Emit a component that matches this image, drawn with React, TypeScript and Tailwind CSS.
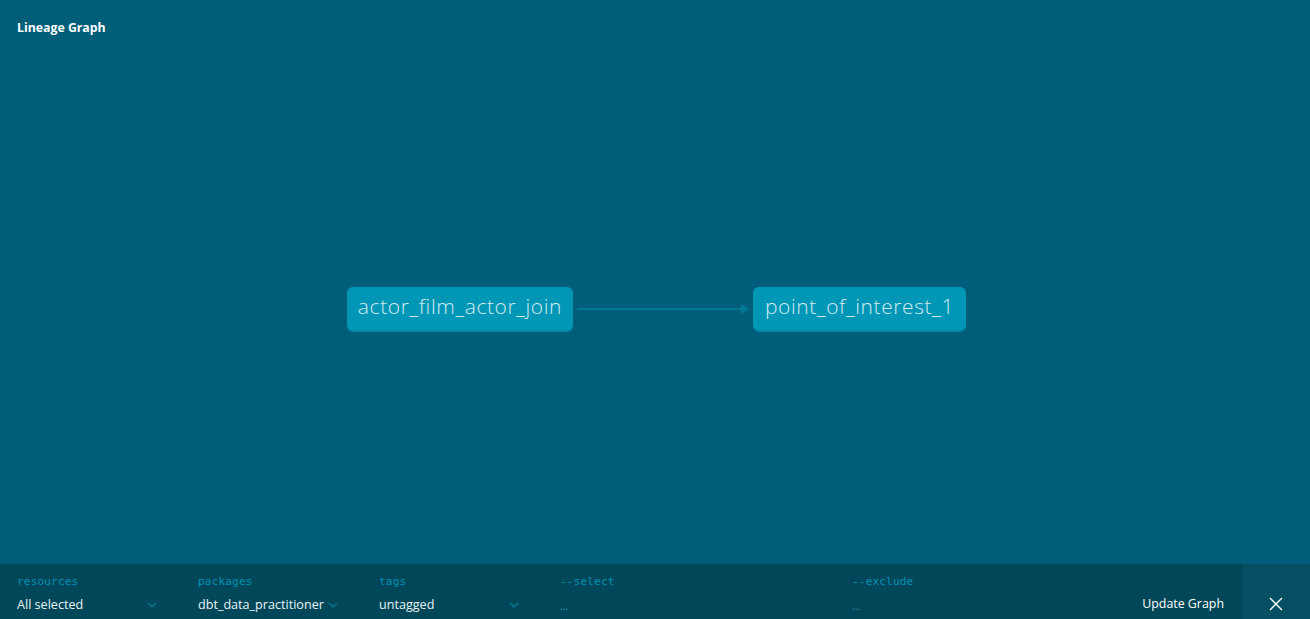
import React from "react";

function Chevron() {
  return (
    <svg width="10" height="6" viewBox="0 0 10 6" className="shrink-0">
      <path d="M1 1 L5 5 L9 1" fill="none" stroke="#087c98" strokeWidth="1.2" />
    </svg>
  );
}

function Field({ label, value, chevron, dim, width }: { label: string; value: string; chevron?: boolean; dim?: boolean; width: string }) {
  return (
    <div className={`flex flex-col ${width}`}>
      <div className="text-[11px] leading-[14px] text-[#0092b2] font-['DejaVu_Sans_Mono',monospace] tracking-[0.2px]">{label}</div>
      <div className="flex items-center justify-between w-[140px] mt-[9px] h-[14px]">
        {dim ? (
          <span className="text-[10px] text-[#2a9ab5] leading-[14px] pt-[2px]">...</span>
        ) : (
          <span className="text-[12.6px] text-[#e8f4f7] leading-[14px]">{value}</span>
        )}
        {chevron && <Chevron />}
      </div>
    </div>
  );
}

export default function App() {
  return (
    <div className="w-[1310px] h-[619px] flex flex-col bg-[#005e7a] overflow-hidden font-['Open_Sans',sans-serif]">
      <div className="relative flex-1">
        <div className="absolute left-[17px] top-[19px] text-[12.3px] font-bold text-white">Lineage Graph</div>
        <svg className="absolute left-0 top-0" width="1310" height="564">
          <line x1="577" y1="309" x2="744" y2="309" stroke="#007996" strokeWidth="2" />
          <path d="M741 304 L749 309 L741 314 Z" fill="#007996" />
        </svg>
        <div className="absolute left-[347px] top-[287px] w-[226px] h-[43px] rounded-[6px] bg-[#0096b5] shadow-[0_2px_0_#0088a6] flex items-center justify-center pb-[4px] text-[21px] font-light text-[#d2ebf1] tracking-[0.6px]">
          actor_film_actor_join
        </div>
        <div className="absolute left-[753px] top-[287px] w-[213px] h-[43px] rounded-[6px] bg-[#0096b5] shadow-[0_2px_0_#0088a6] flex items-center justify-center pb-[4px] text-[21px] font-light text-[#d2ebf1] tracking-[0.6px]">
          point_of_interest_1
        </div>
      </div>
      <div className="h-[55px] bg-[#004759] flex">
        <div className="flex flex-1 pl-[17px] pt-[11px]">
          <Field label="resources" value="All selected" chevron width="w-[181px]" />
          <Field label="packages" value="dbt_data_practitioner" chevron width="w-[181px]" />
          <Field label="tags" value="untagged" chevron width="w-[181px]" />
          <Field label="--select" value="..." dim width="w-[292px]" />
          <Field label="--exclude" value="..." dim width="w-[200px]" />
          <div className="flex-1 flex justify-end items-start pt-[22px] pr-[18px]">
            <span className="text-[12.4px] text-white leading-[14px]">Update Graph</span>
          </div>
        </div>
        <div className="w-[68px] bg-[#054f63] flex items-end justify-center pb-[8px]">
          <svg width="14" height="14" viewBox="0 0 14 14">
            <path d="M1 1 L13 13 M13 1 L1 13" stroke="#ffffff" strokeWidth="1.4" />
          </svg>
        </div>
      </div>
    </div>
  );
}
